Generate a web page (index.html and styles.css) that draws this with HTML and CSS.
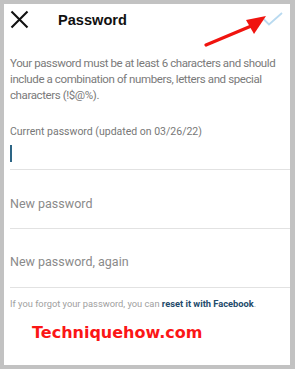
FILE: index.html
```html
<!DOCTYPE html>
<html>
<head>
<meta charset="utf-8">
<link rel="stylesheet" href="styles.css">
</head>
<body>
<div class="panel">
  <div class="topbar">
    <svg class="close" width="19" height="19" viewBox="0 0 19 19"><path d="M1.5 1.5 L17.5 17.5 M17.5 1.5 L1.5 17.5" stroke="#111" stroke-width="2.1" fill="none"/></svg>
    <div class="title">Password</div>
    <svg class="check" width="21" height="14" viewBox="0 0 21 14"><path d="M1 6.5 L7 12.5 L20 1" stroke="#b9daf0" stroke-width="1.8" fill="none"/></svg>
  </div>
  <p class="info">Your password must be at least 6 characters and should include a combination of numbers, letters and special characters (!$@%).</p>
  <div class="field current">
    <div class="label">Current password (updated on 03/26/22)</div>
    <div class="cursor"></div>
  </div>
  <div class="field first"><div class="placeholder">New password</div></div>
  <div class="field second"><div class="placeholder">New password, again</div></div>
  <p class="forgot">If you forgot your password, you can <span class="link">reset it with Facebook</span>.</p>
  <div class="brand">Techniquehow.com</div>
  <svg class="arrow" width="70" height="36" viewBox="0 0 70 36"><path d="M2 33 L52 12" stroke="#f0140f" stroke-width="3.2" stroke-linecap="round"/><path d="M42 8 L62 4 L50 22 Z" fill="#f0140f"/></svg>
</div>
</body>
</html>
```
FILE: styles.css
```css
html, body { margin: 0; padding: 0; }
body {
  background: #c2c2c2;
  width: 295px;
  height: 369px;
  font-family: Roboto, "Liberation Sans", sans-serif;
  overflow: hidden;
}
.panel {
  position: relative;
  margin: 4px 0 0 4px;
  width: 286px;
  height: 361px;
  background: #fff;
  padding-left: 6px;
  box-sizing: border-box;
}
.topbar {
  display: flex;
  align-items: center;
  height: 19px;
  padding-top: 6px;
}
.title {
  margin-left: 29px;
  font-family: "Liberation Sans", Arial, sans-serif;
  font-weight: bold;
  font-size: 14.6px;
  color: #111;
}
.check { margin-left: auto; margin-right: 7px; margin-top: -2px; }
.info {
  margin: 26px 0 0 0;
  font-size: 11.5px;
  letter-spacing: -0.4px;
  line-height: 16px;
  color: #7a7a7a;
  padding-right: 0;
}
.field {
  border-bottom: 1px solid #e2e2e2;
}
.current { padding: 23px 0 7px 0; }
.label { font-size: 10.5px; color: #777; line-height: 12px; }
.cursor { width: 1.5px; height: 17px; background: #2d6585; margin-top: 7px; }
.field .placeholder {
  font-size: 12.5px;
  color: #8a8a8a;
  line-height: 16px;
}
.first { padding: 26px 0 16px 0; }
.second { padding: 25px 0 17px 0; }
.forgot {
  margin: 10px 0 0 0;
  font-size: 9.3px;
  line-height: 12px;
  color: #a0a0a0;
}
.link { color: #234b6b; font-weight: bold; }
.brand {
  margin: 13px 0 0 22px;
  font-family: "DejaVu Sans", Verdana, sans-serif;
  font-weight: bold;
  font-size: 16px;
  line-height: 19px;
  color: #fb1616;
}
.arrow { position: absolute; left: 200px; top: 8px; }
```
